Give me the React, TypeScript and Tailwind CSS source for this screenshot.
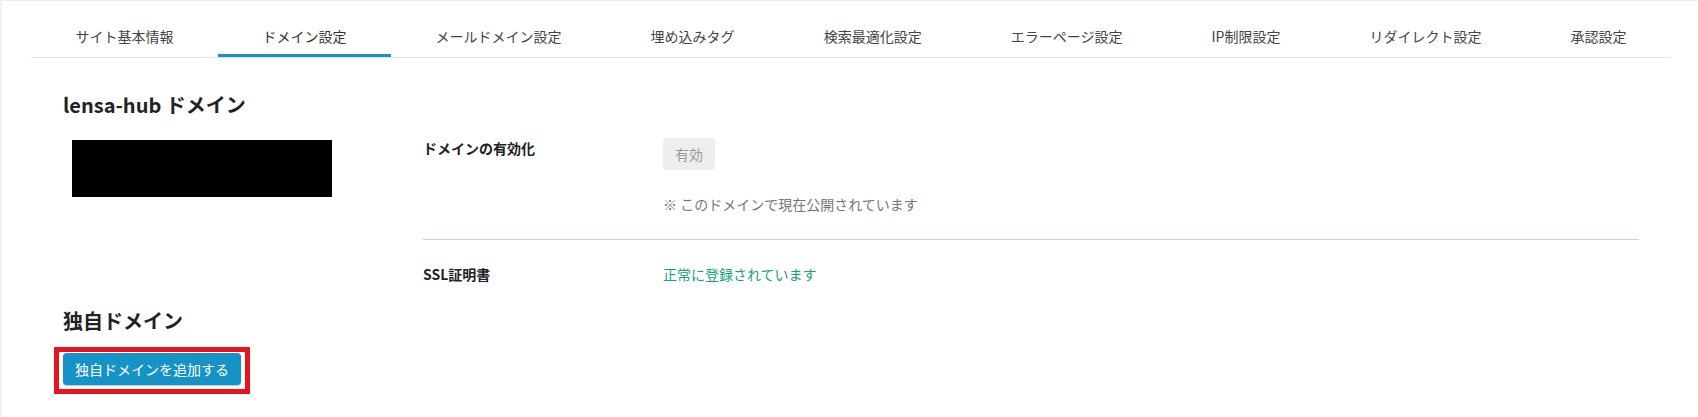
const tabs = [
  "サイト基本情報",
  "ドメイン設定",
  "メールドメイン設定",
  "埋め込みタグ",
  "検索最適化設定",
  "エラーページ設定",
  "IP制限設定",
  "リダイレクト設定",
  "承認設定",
];

export default function App() {
  const active = 1;

  return (
    <div className="min-h-screen bg-white border-t border-[#ededed] border-l-2 border-l-[#f1f1f1] pl-[29px] pr-[27px] font-['Noto_Sans_CJK_JP','Noto_Sans',sans-serif] text-[#333]">
      {/* Tabs */}
      <nav className="flex border-b border-[#e3e3e3]">
        {tabs.map((t, i) => (
          <div
            key={t}
            className={
              i === active
                ? "flex-auto text-center pt-[25px] pb-[8px] text-[14px] leading-[20px] text-[#333] border-b-[3px] border-[#1592c6]"
                : "flex-auto text-center pt-[25px] pb-[8px] text-[14px] leading-[20px] text-[#444] border-b-[3px] border-transparent"
            }
          >
            {t}
          </div>
        ))}
      </nav>

      <div className="px-8 pt-[33px]">
        {/* lensa-hub domain */}
        <h2 className="text-[20px] leading-[28px] font-bold text-[#222]">lensa-hub ドメイン</h2>

        <div className="flex mt-[19px]">
          <div className="w-[360px] shrink-0">
            <div className="ml-[9px] mt-[2px] w-[260px] h-[57px] bg-black" />
          </div>

          <div className="flex-1">
            <div className="flex pb-[25px]">
              <div className="w-[240px] shrink-0 text-[14px] leading-[20px] font-bold text-[#222]">ドメインの有効化</div>
              <div>
                <span className="inline-block h-[32px] px-[12px] rounded bg-[#eeeeee] text-[#9a9a9a] text-[14px] leading-[32px]">
                  有効
                </span>
                <p className="mt-[24px] text-[14px] leading-[20px] text-[#777]">※ このドメインで現在公開されています</p>
              </div>
            </div>

            <div className="border-t border-[#cdd4d4]" />

            <div className="flex pt-[24px]">
              <div className="w-[240px] shrink-0 text-[14px] leading-[20px] font-bold text-[#222]">SSL証明書</div>
              <div className="text-[14px] leading-[20px] text-[#17a27a]">正常に登録されています</div>
            </div>
          </div>
        </div>

        {/* Custom domain */}
        <h2 className="mt-[23px] text-[20px] leading-[28px] font-bold text-[#222]">独自ドメイン</h2>

        <div className="mt-[12px] -ml-[9px] inline-block border-[5px] border-[#e8141c] pt-[1px] px-[4px] pb-[4px]">
          <button className="h-[32px] px-[12px] rounded bg-[#1592c6] text-white text-[14px] leading-[32px] shadow-[0_1px_1px_rgba(0,0,0,0.25)]">
            独自ドメインを追加する
          </button>
        </div>
      </div>
    </div>
  );
}
